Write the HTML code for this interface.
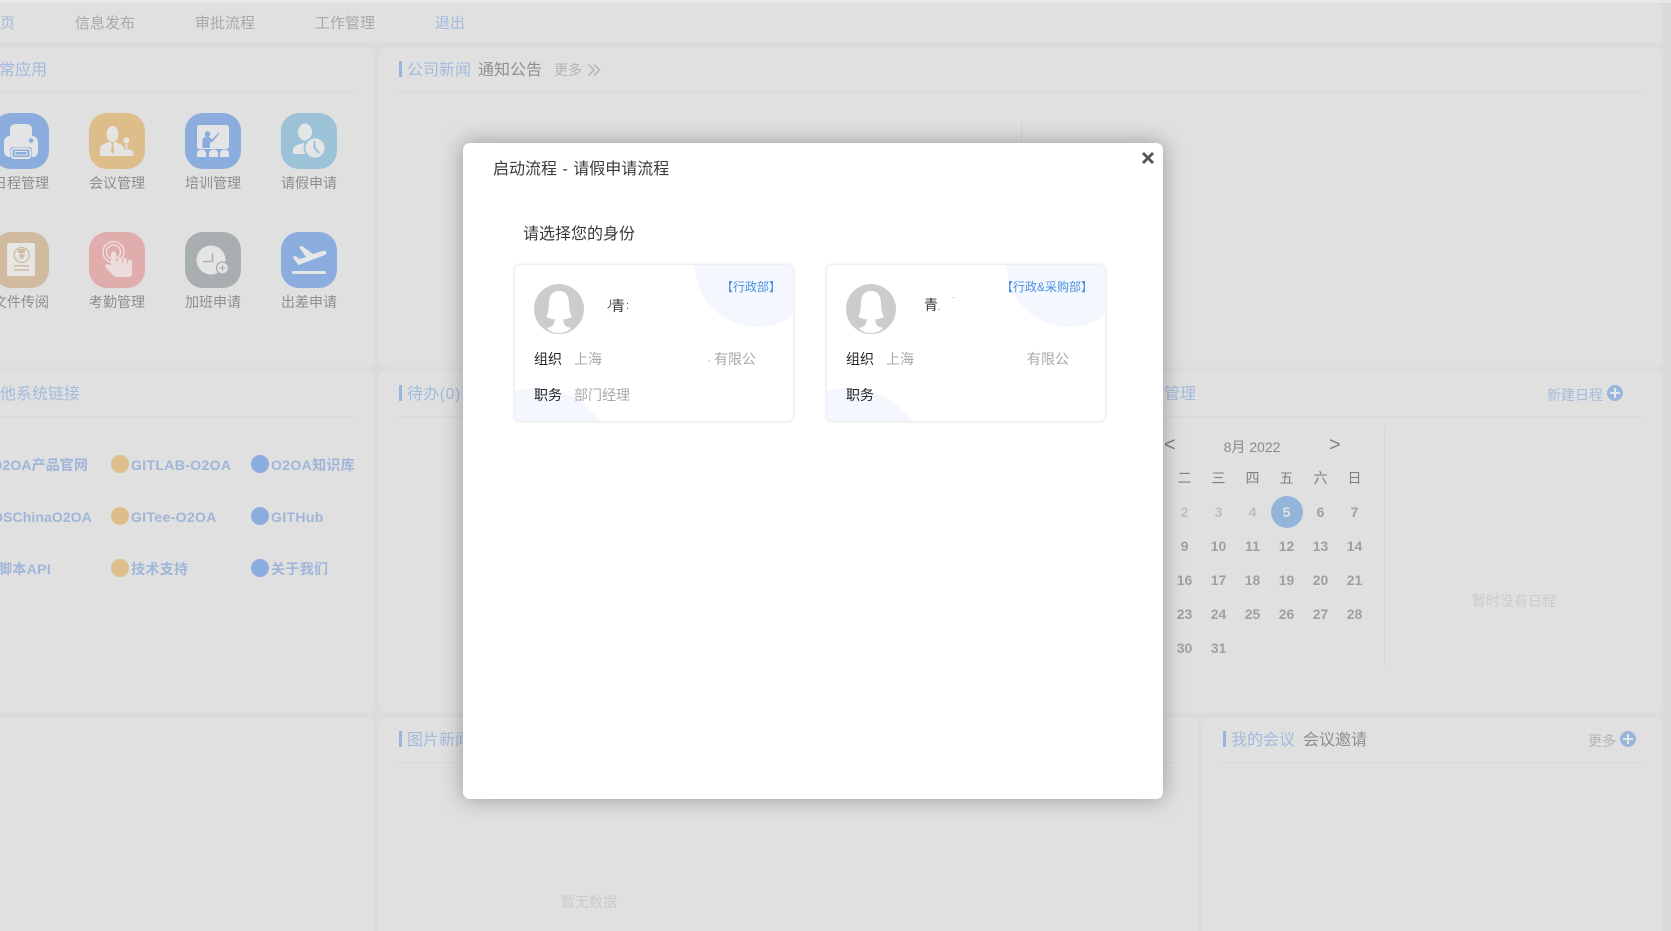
<!DOCTYPE html>
<html lang="zh-CN"><head><meta charset="utf-8"><title>启动流程</title>
<style>
html,body{margin:0;padding:0;width:1671px;height:931px;overflow:hidden;background:#dbdbdb}
body{position:relative;font-family:"Liberation Sans","Noto Sans CJK SC",sans-serif;font-size:14px}
.c{position:absolute;background:#e0e0e0;border-radius:8px}
.t{position:absolute;white-space:nowrap;line-height:20px;height:20px}
.h{font-size:16px;color:#a3badd}
.g{font-size:16px;color:#8f8f8f}
.nav{color:#a8a8a8;font-size:15px}
.line{position:absolute;height:1px;background:#d9d9d9}
.bar{position:absolute;width:3px;height:16px;background:#98b6da}
.lb{color:#8e8e8e;width:56px;text-align:center}
.ic{position:absolute;width:56px;height:56px;border-radius:18px}
.dot{position:absolute;width:18px;height:18px;border-radius:50%}
.lk{font-weight:bold;color:#9fb5d9;letter-spacing:.35px}
.d{position:absolute;width:34px;margin-left:.5px;text-align:center;line-height:20px;font-weight:bold;color:#a0a0a0;font-size:14px}
.w{font-weight:normal;color:#7f7f7f}
.o{color:#bdbdbd}
.dlg{position:absolute;left:463px;top:143px;width:700px;height:656px;background:#fff;border-radius:7px;box-shadow:0 0 22px rgba(0,0,0,.32)}
.card{position:absolute;top:121px;width:278px;height:156px;border:1px solid #efefef;border-radius:7px;overflow:hidden;background:#fff;box-shadow:0 0 3px rgba(0,0,0,.1)}
.card i{position:absolute;background:#f4f8fe;border-radius:50%}
.k{color:#222}
.v{color:#a8a8a8}
.tag{color:#4a90e2;font-size:12px;right:12px;top:12px}
</style></head><body>
<div style="position:absolute;left:0;top:0;width:1671px;height:3px;background:#e8e8ec"></div>
<div class="c" style="left:-10px;top:3px;width:1673px;height:40px;border-radius:0 6px 6px 0"></div>
<div class="t nav" style="left:0;top:14px;color:#a3badd">页</div>
<div class="t nav" style="left:75px;top:14px">信息发布</div>
<div class="t nav" style="left:195px;top:14px">审批流程</div>
<div class="t nav" style="left:315px;top:14px">工作管理</div>
<div class="t nav" style="left:435px;top:14px;color:#a3badd">退出</div>

<!-- cards -->
<div class="c" style="left:-20px;top:47px;width:395px;height:320px"></div>
<div class="c" style="left:379px;top:47px;width:1284px;height:320px"></div>
<div class="c" style="left:-20px;top:371px;width:395px;height:342px"></div>
<div class="c" style="left:379px;top:371px;width:1284px;height:342px"></div>
<div class="c" style="left:-20px;top:717px;width:395px;height:240px"></div>
<div class="c" style="left:379px;top:717px;width:820px;height:240px"></div>
<div class="c" style="left:1203px;top:717px;width:460px;height:240px"></div>

<!-- row 1 left -->
<div class="t h" style="left:-1px;top:61px">常应用</div>
<div class="line" style="left:0;top:92px;width:355px"></div>

<div class="ic" style="left:-7px;top:113px;background:#8badde"><svg width="56" height="56" viewBox="0 0 56 56"><path d="M17 24v-8a5 5 0 0 1 5-5h12a5 5 0 0 1 5 5v8z" fill="#e2e4e6"/><path d="M11 29a6 6 0 0 1 6-6h22a6 6 0 0 1 6 6v10a5 5 0 0 1-5 5h-1v-7a3 3 0 0 0-3-3H20a3 3 0 0 0-3 3v7h-1a5 5 0 0 1-5-5z" fill="#e2e4e6"/><rect x="18.500" y="35.500" width="19" height="9.500" rx="3" fill="none" stroke="#e2e4e6" stroke-width="2"/><rect x="22" y="38.500" width="12" height="3.500" fill="#8badde" stroke="#e2e4e6" stroke-width="1"/><circle cx="38" cy="27.500" r="2.300" fill="#8badde"/></svg></div>
<div class="ic" style="left:89px;top:113px;background:#ddbd8a"><svg width="56" height="56" viewBox="0 0 56 56"><ellipse cx="23.500" cy="21" rx="6" ry="8" fill="#e4e4e2"/><path d="M11 43v-7c0-3 2.500-4.500 5.500-5.500l4.500-2 2.500 3.500 2.500-3.500 4 2c1.500.6 3 1.500 4 3l1.500 3h6c1.500 0 3 2 3 3.500v3z" fill="#e4e4e2"/><path d="M22.700 32h1.600l.8 6-1.600 3-1.600-3z" fill="#ddbd8a"/><circle cx="37.500" cy="27.500" r="3.500" fill="#e4e4e2" stroke="#ddbd8a" stroke-width="1"/><path d="M37.500 31v5" stroke="#e4e4e2" stroke-width="2"/></svg></div>
<div class="ic" style="left:185px;top:113px;background:#8badde"><svg width="56" height="56" viewBox="0 0 56 56"><rect x="12" y="12" width="32" height="24" rx="2.500" fill="#e2e4e6"/><circle cx="22.500" cy="21" r="2.800" fill="#8badde"/><path d="M17.500 35v-7c0-3 2-4.500 4.500-4.500 3 0 3.500 1.500 5 3l4-4 1 1-5 6-2-1v6.500z" fill="#8badde"/><path d="M28 27l6-7" stroke="#8badde" stroke-width="1.200"/><path d="M12 44v-3.500c0-2.500 2-4 4.500-4s4.500 1.500 4.500 4V44zM24 44v-3.500c0-2.500 2-4 4.500-4s4.500 1.500 4.500 4V44zM35 44v-3.500c0-2.500 2-4 4.500-4s4.500 1.500 4.500 4V44z" fill="#e2e4e6"/></svg></div>
<div class="ic" style="left:281px;top:113px;background:#9bc2d6"><svg width="56" height="56" viewBox="0 0 56 56"><ellipse cx="24" cy="19" rx="7" ry="8.500" fill="#e4e6e6"/><path d="M12 41v-4c0-3 3-5 7-6l3-1c2 1 4 1 6 0l5 2v9z" fill="#e4e6e6"/><circle cx="34" cy="35" r="10.500" fill="#e4e6e6" stroke="#9bc2d6" stroke-width="1.800"/><path d="M33.500 28v7l4.500 5" stroke="#9bc2d6" stroke-width="2" fill="none"/></svg></div>

<div class="ic" style="left:-7px;top:232px;background:#d1bb9f"><svg width="56" height="56" viewBox="0 0 56 56"><rect x="14" y="11" width="28" height="33" rx="2" fill="#e6e6e4"/><circle cx="28.700" cy="23" r="7.500" fill="none" stroke="#d1bb9f" stroke-width="1.300"/><path d="M28.700 20l1 2.600 2.800.2-2.200 1.800.8 2.800-2.400-1.500-2.400 1.500.8-2.800-2.200-1.800 2.800-.2z" fill="#d1bb9f"/><path d="M25 17h7v4h-7z" fill="#d1bb9f"/><path d="M21 33.700h15M21 38h15" stroke="#d1bb9f" stroke-width="1.500"/></svg></div>
<div class="ic" style="left:89px;top:232px;background:#e1acac"><svg width="56" height="56" viewBox="0 0 56 56"><circle cx="24.500" cy="20" r="10.500" fill="none" stroke="#ecdcdc" stroke-width="1.500"/><circle cx="24.500" cy="20" r="7" fill="none" stroke="#ecdcdc" stroke-width="1.500"/><path d="M22 22a2.500 2.500 0 0 1 5 0v8l2 .5v-3a2 2 0 0 1 4 0v3.500h1v-3a2 2 0 0 1 4 0v3.500h1v-2a2 2 0 0 1 4 0V42a3 3 0 0 1-3 3H28c-2 0-3-1-4-2l-7-7c-2-2 0-5 3-3.500l2 1.500z" fill="#ecdcdc"/></svg></div>
<div class="ic" style="left:185px;top:232px;background:#a9afb0"><svg width="56" height="56" viewBox="0 0 56 56"><circle cx="26" cy="28" r="14.500" fill="#e4e4e4"/><path d="M27.500 21v8.500H18" fill="none" stroke="#a9afb0" stroke-width="1.500"/><circle cx="37.500" cy="36" r="6" fill="#e4e4e4" stroke="#a9afb0" stroke-width="1.300"/><path d="M37.500 33v6M34.500 36h6" stroke="#a9afb0" stroke-width="1.200"/></svg></div>
<div class="ic" style="left:281px;top:232px;background:#8badde"><svg width="56" height="56" viewBox="0 0 56 56"><path d="M11.500 25l3-1 4.500 3 6-2-7-10 3-1 11 8 9-3q4-1 4.500 1.500 0 2-3 3l-25 9.500z" fill="#e4e6e8"/><rect x="11" y="39" width="34" height="3" rx="1.500" fill="#e4e6e8"/></svg></div>

<div class="t lb" style="left:-7px;top:173px">日程管理</div>
<div class="t lb" style="left:89px;top:173px">会议管理</div>
<div class="t lb" style="left:185px;top:173px">培训管理</div>
<div class="t lb" style="left:281px;top:173px">请假申请</div>
<div class="t lb" style="left:-7px;top:292px">文件传阅</div>
<div class="t lb" style="left:89px;top:292px">考勤管理</div>
<div class="t lb" style="left:185px;top:292px">加班申请</div>
<div class="t lb" style="left:281px;top:292px">出差申请</div>

<!-- row 1 middle -->
<div class="bar" style="left:399px;top:61px"></div>
<div class="t h" style="left:407px;top:61px">公司新闻</div>
<div class="t g" style="left:478px;top:61px">通知公告</div>
<div class="t" style="left:554px;top:60px;color:#b4b4b4">更多</div>
<svg style="position:absolute;left:587px;top:63px" width="14" height="14" viewBox="0 0 14 14"><path d="M1.500 1.500L7 7l-5.500 5.500M7 1.500L12.500 7 7 12.500" fill="none" stroke="#b4b4b4" stroke-width="1.500"/></svg>
<div class="line" style="left:399px;top:92px;width:1244px"></div>
<div style="position:absolute;left:1021px;top:121px;width:1px;height:30px;background:#d6d6d6"></div>

<!-- row 2 left -->
<div class="t h" style="left:0;top:385px">他系统链接</div>
<div class="line" style="left:0;top:416px;width:355px"></div>
<div class="t lk" style="left:-10px;top:455px;width:98px;text-align:right;letter-spacing:.1px">O2OA产品官网</div>
<div class="t lk" style="left:-11px;top:507px;width:103px;text-align:right;letter-spacing:.1px">OSChinaO2OA</div>
<div class="t lk" style="left:-2px;top:559px">脚本API</div>
<div class="dot" style="left:111px;top:455px;background:#ddbd8a"></div>
<div class="dot" style="left:111px;top:507px;background:#ddbd8a"></div>
<div class="dot" style="left:111px;top:559px;background:#ddbd8a"></div>
<div class="dot" style="left:251px;top:455px;background:#8badde"></div>
<div class="dot" style="left:251px;top:507px;background:#8badde"></div>
<div class="dot" style="left:251px;top:559px;background:#8badde"></div>
<div class="t lk" style="left:131px;top:455px">GITLAB-O2OA</div>
<div class="t lk" style="left:131px;top:507px">GITee-O2OA</div>
<div class="t lk" style="left:131px;top:559px">技术支持</div>
<div class="t lk" style="left:271px;top:455px">O2OA知识库</div>
<div class="t lk" style="left:271px;top:507px">GITHub</div>
<div class="t lk" style="left:271px;top:559px">关于我们</div>

<div class="bar" style="left:399px;top:385px"></div>
<div class="t h" style="left:407px;top:385px;letter-spacing:.4px">待办(0)</div>
<div class="line" style="left:399px;top:416px;width:1244px"></div>

<!-- calendar -->
<div class="t h" style="left:1164px;top:385px">管理</div>
<div class="t" style="left:1547px;top:385px;color:#a3badd">新建日程</div>
<svg style="position:absolute;left:1607px;top:385px" width="16" height="16" viewBox="0 0 16 16"><circle cx="8" cy="8" r="8" fill="#98b6da"/><path d="M8 3v10M3 8h10" stroke="#e4e6e8" stroke-width="2"/></svg>
<div class="t" style="left:1164px;top:435px;font-size:20px;color:#7f7f7f">&lt;</div>
<div class="t" style="left:1329px;top:435px;font-size:20px;color:#7f7f7f">&gt;</div>
<div class="t" style="left:1202px;top:437px;width:100px;text-align:center;color:#8a8a8a">8月 2022</div>
<div style="position:absolute;left:1384px;top:427px;width:1px;height:240px;background:#d8d8d8"></div>
<div class="t" style="left:1472px;top:591px;color:#cbcbcb">暂时没有日程</div>

<div class="d w" style="left:1167px;top:468px">二</div><div class="d w" style="left:1201px;top:468px">三</div><div class="d w" style="left:1235px;top:468px">四</div><div class="d w" style="left:1269px;top:468px">五</div><div class="d w" style="left:1303px;top:468px">六</div><div class="d w" style="left:1337px;top:468px">日</div>
<div style="position:absolute;left:1271px;top:496px;width:32px;height:32px;border-radius:50%;background:#94b4da"></div>
<div class="d o" style="left:1167px;top:502px">2</div><div class="d o" style="left:1201px;top:502px">3</div><div class="d o" style="left:1235px;top:502px">4</div><div class="d" style="left:1269px;top:502px;color:#e0e4e8">5</div><div class="d" style="left:1303px;top:502px">6</div><div class="d" style="left:1337px;top:502px">7</div>
<div class="d" style="left:1167px;top:536px">9</div><div class="d" style="left:1201px;top:536px">10</div><div class="d" style="left:1235px;top:536px">11</div><div class="d" style="left:1269px;top:536px">12</div><div class="d" style="left:1303px;top:536px">13</div><div class="d" style="left:1337px;top:536px">14</div>
<div class="d" style="left:1167px;top:570px">16</div><div class="d" style="left:1201px;top:570px">17</div><div class="d" style="left:1235px;top:570px">18</div><div class="d" style="left:1269px;top:570px">19</div><div class="d" style="left:1303px;top:570px">20</div><div class="d" style="left:1337px;top:570px">21</div>
<div class="d" style="left:1167px;top:604px">23</div><div class="d" style="left:1201px;top:604px">24</div><div class="d" style="left:1235px;top:604px">25</div><div class="d" style="left:1269px;top:604px">26</div><div class="d" style="left:1303px;top:604px">27</div><div class="d" style="left:1337px;top:604px">28</div>
<div class="d" style="left:1167px;top:638px">30</div><div class="d" style="left:1201px;top:638px">31</div>

<!-- row 3 -->
<div class="bar" style="left:399px;top:731px"></div>
<div class="t h" style="left:407px;top:731px">图片新闻</div>
<div class="line" style="left:399px;top:762px;width:780px"></div>
<div class="t" style="left:561px;top:892px;color:#cbcbcb">暂无数据</div>
<div class="bar" style="left:1223px;top:731px"></div>
<div class="t h" style="left:1231px;top:731px">我的会议</div>
<div class="t g" style="left:1303px;top:731px">会议邀请</div>
<div class="t" style="left:1588px;top:731px;color:#b4b4b4">更多</div>
<svg style="position:absolute;left:1620px;top:731px" width="16" height="16" viewBox="0 0 16 16"><circle cx="8" cy="8" r="8" fill="#98b6da"/><path d="M8 3v10M3 8h10" stroke="#e4e6e8" stroke-width="2"/></svg>
<div class="line" style="left:1223px;top:762px;width:420px"></div>

<!-- dialog -->
<div class="dlg">
<div class="t" style="left:30px;top:17px;font-size:16px;color:#3a3a3a;word-spacing:1px">启动流程 - 请假申请流程</div>
<svg style="position:absolute;left:679px;top:9px" width="12" height="12" viewBox="0 0 12 12"><path d="M1 1l10 10M11 1L1 11" stroke="#555" stroke-width="2.800"/></svg>
<div class="t" style="left:60px;top:82px;font-size:16px;color:#3a3a3a">请选择您的身份</div>

<div class="card" style="left:51px">
<i style="left:180px;top:-62px;width:124px;height:124px"></i>
<i style="left:-60px;top:123px;width:161px;height:161px"></i>
<svg style="position:absolute;left:19px;top:19px" width="50" height="50" viewBox="0 0 50 50"><circle cx="25" cy="25" r="25" fill="#ccc"/><path d="M25 7c-7 0-10 5-10 12 0 6-1 10-3 14 3 1 7 3 9 2 1 3-5 6-9 8 3 4 8 6 13 6s10-2 13-6c-4-2-10-5-9-8 2 1 6-1 9-2-2-4-3-8-3-14 0-7-3-12-10-12z" fill="#fff"/><path d="M12 33c4 1 7 3 8.500 6-1.500 3-4.500 4.500-7.500 5-3-3-3-8-1-11zM38 33c-4 1-7 3-8.500 6 1.500 3 4.500 4.500 7.500 5 3-3 3-8 1-11z" fill="#ccc"/></svg>
<div class="t" style="left:90px;top:31px;width:6px;overflow:hidden;color:#333;font-size:10px">丿</div>
<div class="t" style="left:96px;top:31px;color:#333">青</div>
<div class="t" style="left:111px;top:31px;color:#555;font-size:11px">:</div>
<div class="t tag">【行政部】</div>
<div class="t k" style="left:19px;top:84px">组织</div><div class="t v" style="left:59px;top:84px">上海</div>
<div class="t v" style="left:199px;top:84px">有限公</div><div class="t v" style="left:193px;top:84px;font-size:8px">,</div>
<div class="t k" style="left:19px;top:120px">职务</div><div class="t v" style="left:59px;top:120px">部门经理</div>
</div>

<div class="card" style="left:363px">
<i style="left:180px;top:-62px;width:124px;height:124px"></i>
<i style="left:-60px;top:123px;width:161px;height:161px"></i>
<svg style="position:absolute;left:19px;top:19px" width="50" height="50" viewBox="0 0 50 50"><circle cx="25" cy="25" r="25" fill="#ccc"/><path d="M25 7c-7 0-10 5-10 12 0 6-1 10-3 14 3 1 7 3 9 2 1 3-5 6-9 8 3 4 8 6 13 6s10-2 13-6c-4-2-10-5-9-8 2 1 6-1 9-2-2-4-3-8-3-14 0-7-3-12-10-12z" fill="#fff"/><path d="M12 33c4 1 7 3 8.500 6-1.500 3-4.500 4.500-7.500 5-3-3-3-8-1-11zM38 33c-4 1-7 3-8.500 6 1.500 3 4.500 4.500 7.500 5 3-3 3-8 1-11z" fill="#ccc"/></svg>
<div class="t" style="left:97px;top:30px;color:#333">青<span style="font-size:8px">.</span></div>
<div style="position:absolute;left:126px;top:32px;width:1px;height:1px;background:#999"></div>
<div class="t tag">【行政&amp;采购部】</div>
<div class="t k" style="left:19px;top:84px">组织</div><div class="t v" style="left:59px;top:84px">上海</div>
<div class="t v" style="left:200px;top:84px">有限公</div>
<div class="t k" style="left:19px;top:120px">职务</div>
</div>
</div>
</body></html>
